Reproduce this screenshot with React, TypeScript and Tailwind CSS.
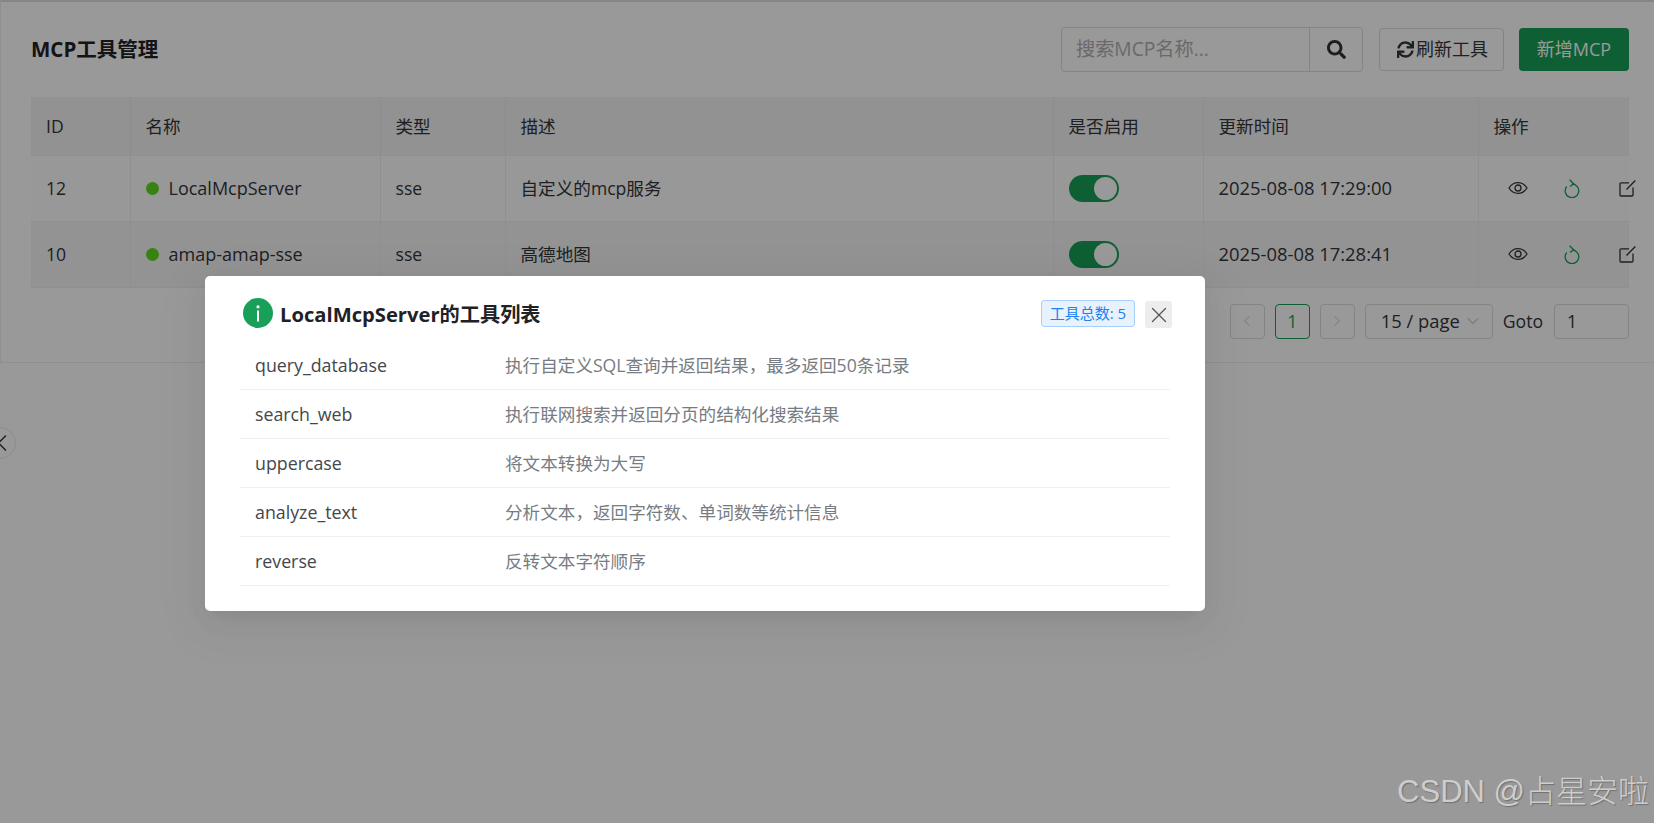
import { ChevronLeft, ChevronRight, ChevronDown, X } from 'lucide-react';
import { FaSearch, FaSync } from 'react-icons/fa';

const FONT = "font-['Open_Sans','Noto_Sans_CJK_SC',sans-serif]";

const servers = [
  { id: 12, name: 'LocalMcpServer', type: 'sse', desc: '自定义的mcp服务', time: '2025-08-08 17:29:00' },
  { id: 10, name: 'amap-amap-sse', type: 'sse', desc: '高德地图', time: '2025-08-08 17:28:41' },
];

const tools = [
  { name: 'query_database', desc: '执行自定义SQL查询并返回结果，最多返回50条记录' },
  { name: 'search_web', desc: '执行联网搜索并返回分页的结构化搜索结果' },
  { name: 'uppercase', desc: '将文本转换为大写' },
  { name: 'analyze_text', desc: '分析文本，返回字符数、单词数等统计信息' },
  { name: 'reverse', desc: '反转文本字符顺序' },
];

function EyeIcon() {
  return (
    <svg width="20" height="14" viewBox="0 0 20 14" fill="none" stroke="#333" strokeWidth="1.3">
      <path d="M1 7c2.200-3.600 5.200-5.400 9-5.400s6.800 1.800 9 5.400c-2.200 3.600-5.200 5.400-9 5.400S3.200 10.600 1 7Z" />
      <circle cx="10" cy="7" r="3" />
    </svg>
  );
}

function ReloadIcon() {
  return (
    <svg width="16" height="19" viewBox="0 0 16 19" fill="none" stroke="#18a058" strokeWidth="1.3">
      <path d="M8 5a6.800 6.800 0 1 1-5.300 2.500" />
      <path d="M5.600 0.800 9.600 4.800 6 7.600" />
    </svg>
  );
}

function EditIcon() {
  return (
    <svg width="17" height="17" viewBox="0 0 17 17" fill="none" stroke="#333" strokeWidth="1.3">
      <path d="M10 2.800H2a1 1 0 0 0-1 1V15a1 1 0 0 0 1 1h11a1 1 0 0 0 1-1V7.500" />
      <path d="M7.500 9.500 16.300 0.500" />
    </svg>
  );
}

function InfoIcon() {
  return (
    <svg width="30" height="30" viewBox="0 0 30 30">
      <circle cx="15" cy="15" r="15" fill="#18a058" />
      <circle cx="15" cy="8.800" r="1.600" fill="#fff" />
      <rect x="14" y="12.500" width="2" height="11" fill="#fff" />
    </svg>
  );
}

function Toggle() {
  return (
    <div className="flex h-[27px] w-[50px] items-center justify-end rounded-full bg-[#18a058] pr-[2px]">
      <div className="h-[23px] w-[23px] rounded-full bg-white" />
    </div>
  );
}

function PageBox({ children, active }: { children: React.ReactNode; active?: boolean }) {
  return (
    <div
      className={
        active
          ? 'flex h-[35px] w-[35px] items-center justify-center rounded-[4px] border border-[#18a058] text-[#18a058]'
          : 'flex h-[35px] w-[35px] items-center justify-center rounded-[4px] border border-[#dcdcdc] text-[#c2c2c2]'
      }
    >
      {children}
    </div>
  );
}

export default function App() {
  return (
    <div className={`${FONT} relative h-[823px] w-[1654px] overflow-hidden bg-white text-[17.6px] text-[#333639]`}>
      <div className="h-[363px] border-t-2 border-b border-l border-t-[#e0e0e0] border-b-[#efeff5] border-l-[#efeff5] pt-[25px] pr-[25px] pl-[29px]">
        <div className="flex h-[70px] items-start justify-between">
          <h1 className="mt-[7px] ml-[1px] text-[20.500px] font-bold text-[#1f2225]">MCP工具管理</h1>
          <div className="flex items-center">
            <div className="flex h-[45px] w-[302px] rounded-[4px] border border-[#dcdcdc]">
              <div className="flex flex-1 items-center border-r border-[#dcdcdc] pl-[14px] text-[19.200px] text-[#b0b0b0]">搜索MCP名称...</div>
              <div className="flex w-[52px] items-center justify-center text-[#333]">
                <FaSearch size={19} />
              </div>
            </div>
            <div className="ml-[16px] flex h-[43px] w-[125px] items-center justify-center gap-[2px] rounded-[4px] border border-[#dcdcdc] pl-[2px] text-[18px]">
              <FaSync size={17} />
              刷新工具
            </div>
            <div className="ml-[15px] flex h-[43px] w-[110px] items-center justify-center rounded-[4px] bg-[#18a058] text-[18px] text-white">新增MCP</div>
          </div>
        </div>

        <table className="ml-[1px] w-[1598px] table-fixed border-collapse">
          <colgroup>
            <col className="w-[99px]" />
            <col className="w-[250px]" />
            <col className="w-[125px]" />
            <col className="w-[548px]" />
            <col className="w-[150px]" />
            <col className="w-[275px]" />
            <col className="w-[151px]" />
          </colgroup>
          <thead>
            <tr className="h-[58px] border-b border-[#efeff5] bg-[#f3f3f3] text-left">
              {['ID', '名称', '类型', '描述', '是否启用', '更新时间', '操作'].map((h, i) => (
                <th key={h} className={i < 6 ? 'border-r border-[#ebebeb] pl-[15px] font-normal' : 'pl-[15px] font-normal'}>
                  {h}
                </th>
              ))}
            </tr>
          </thead>
          <tbody>
            {servers.map((s, i) => (
              <tr key={s.id} className={i === 0 ? 'h-[66px] border-b border-[#efeff5] bg-[#fdfdfd]' : 'h-[66px] border-b border-[#efeff5] bg-[#f5f5f5]'}>
                <td className="border-r border-[#efeff5] pl-[15px]">{s.id}</td>
                <td className="border-r border-[#efeff5] pl-[15px] text-[18px]">
                  <div className="flex items-center gap-[10px]">
                    <span className="h-[13px] w-[13px] shrink-0 rounded-full bg-[#5fd820]" />
                    {s.name}
                  </div>
                </td>
                <td className="border-r border-[#efeff5] pl-[15px]">{s.type}</td>
                <td className="border-r border-[#efeff5] pl-[15px]">{s.desc}</td>
                <td className="border-r border-[#efeff5] pl-[15px]">
                  <Toggle />
                </td>
                <td className="border-r border-[#efeff5] pl-[15px] text-[18.400px]">{s.time}</td>
                <td className="pl-[29px]">
                  <div className="flex w-[140px] items-center">
                    <span className="flex w-[56px]"><EyeIcon /></span>
                    <span className="flex w-[55px]"><ReloadIcon /></span>
                    <EditIcon />
                  </div>
                </td>
              </tr>
            ))}
          </tbody>
        </table>

        <div className="mt-[16px] flex items-center justify-end text-[#333639]">
          <PageBox><ChevronLeft size={18} strokeWidth={1.2} /></PageBox>
          <div className="ml-[10px]"><PageBox active>1</PageBox></div>
          <div className="ml-[10px]"><PageBox><ChevronRight size={18} strokeWidth={1.2} /></PageBox></div>
          <div className="ml-[10px] flex h-[35px] w-[128px] items-center justify-between rounded-[4px] border border-[#dcdcdc] pr-[12px] pl-[15px] text-[18.400px]">
            15 / page
            <ChevronDown size={20} strokeWidth={1} className="mr-[-3px] text-[#999]" />
          </div>
          <span className="ml-[10px] mr-[1px]">Goto</span>
          <div className="ml-[10px] flex h-[35px] w-[75px] items-center rounded-[4px] border border-[#dcdcdc] pl-[12px]">1</div>
        </div>
      </div>

      <div className="absolute top-[427px] left-[-16px] flex h-[32px] w-[32px] items-center justify-center rounded-full border border-[#ebebeb] bg-white pl-[3px]">
        <ChevronLeft size={28} strokeWidth={1.3} className="shrink-0" />
      </div>

      <div className="absolute inset-0 bg-black/40" />

      <div className="absolute top-[276px] left-[205px] h-[335px] w-[1000px] rounded-[5px] bg-white px-[35px] shadow-[0_6px_16px_-9px_rgba(0,0,0,0.08),0_9px_28px_0_rgba(0,0,0,0.05),0_12px_48px_16px_rgba(0,0,0,0.03)]">
        <div className="flex h-[65px] items-center pt-[10px]">
          <div className="ml-[3px] flex items-center gap-[7px]">
            <InfoIcon />
            <span className="mt-[1px] text-[20.200px] font-bold text-[#1f2225]">LocalMcpServer的工具列表</span>
          </div>
          <span className="ml-auto flex h-[27px] w-[94px] items-center justify-center rounded-[3px] border border-[#a6cffb] bg-[#e8f2fd] text-[15px] text-[#2080f0]">工具总数: 5</span>
          <div className="mt-[2px] mr-[-2px] ml-[10px] flex h-[27px] w-[27px] items-center justify-center rounded-[3px] bg-[#ededed] text-[#555]">
            <X size={26} strokeWidth={1.2} />
          </div>
        </div>
        {tools.map((t) => (
          <div key={t.name} className="flex h-[49px] items-center border-b border-[#efeff5] pl-[15px]">
            <span className="w-[250px] text-[17.800px] text-[#43474b]">{t.name}</span>
            <span className="text-[#767c82]">{t.desc}</span>
          </div>
        ))}
      </div>

      <div className="absolute right-[5px] bottom-[13px] font-['Liberation_Sans','Noto_Sans_CJK_SC',sans-serif] text-[31px] leading-[36px] font-light text-[#cdcdcd] [text-shadow:1px_1px_1px_#707070]">
        CSDN @占星安啦
      </div>
    </div>
  );
}
